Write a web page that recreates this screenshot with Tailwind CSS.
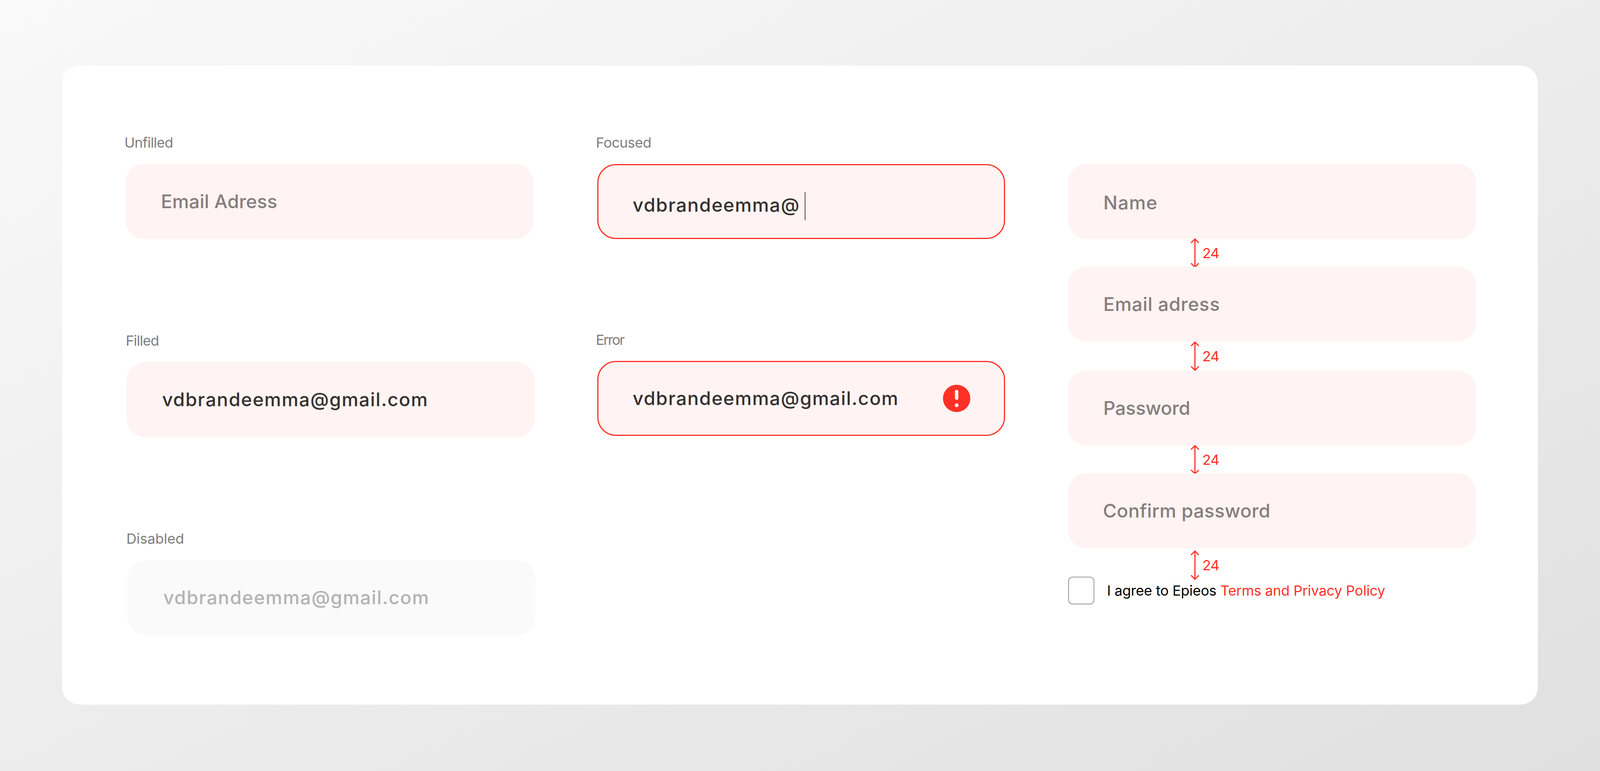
<!DOCTYPE html>
<html lang="en">
<head>
    <meta charset="utf-8" />
    <title>Input fields</title>
    <script src="https://cdn.jsdelivr.net/npm/@tailwindcss/browser@4"></script>
</head>
<body class="w-screen h-screen overflow-hidden bg-gradient-to-br from-[#f9f9f9] to-[#e0e0e0] font-['Inter',sans-serif]">
    <div class="ml-[159px] mt-[168px] w-[3778px] h-[1636px] bg-white rounded-[45px] pl-[162px] pt-[170px] flex">

        <!-- column 1 -->
        <div class="w-[1207.6px] flex flex-col">
            <div class="-ml-[2.5px] text-[36px] leading-[54px] tracking-[-0.8px] text-[#7d7d7d]">Unfilled</div>
            <div class="mt-[28px] w-[1045px] h-[192px] rounded-[48px] bg-[#fff3f3] flex items-center pl-[91px] text-[48px] font-medium leading-[60px] text-[#857d7c] tracking-[0.1px]">Email Adress</div>

            <div class="mt-[233px] ml-[1px] text-[36px] leading-[54px] tracking-[-1px] text-[#7d7d7d]">Filled</div>
            <div class="mt-[28px] ml-[3px] w-[1045px] h-[192px] rounded-[48px] bg-[#fff3f3] flex items-center pl-[91px] text-[48px] font-medium leading-[60px] text-[#353130] tracking-[1.7px]">vdbrandeemma@gmail.com</div>

            <div class="mt-[233px] ml-[2.5px] text-[36px] leading-[54px] tracking-[0px] text-[#7d7d7d]">Disabled</div>
            <div class="mt-[28px] ml-[5px] w-[1045px] h-[192px] rounded-[48px] bg-[#fafafa] flex items-center pl-[92px] text-[48px] font-medium leading-[60px] text-[#b3b3b3] tracking-[1.7px]">vdbrandeemma@gmail.com</div>
        </div>

        <!-- column 2 -->
        <div class="w-[1205.4px] flex flex-col">
            <div class="-ml-[3px] text-[36px] leading-[54px] tracking-[-0.5px] text-[#7d7d7d]">Focused</div>
            <div class="mt-[28px] w-[1044px] h-[192px] rounded-[48px] bg-[#fff3f3] border-[3px] border-[#ff3126] flex items-center pl-[88px] text-[48px] font-medium leading-[60px] text-[#353130] tracking-[1.7px]">
                <span class="mt-[18px]">vdbrandeemma@</span>
                <span class="ml-[12px] mt-[24px] w-[2px] h-[72px] bg-[#4a4645]"></span>
            </div>

            <div class="mt-[230.5px] -ml-[3px] text-[36px] leading-[54px] tracking-[-2.5px] text-[#7d7d7d]">Error</div>
            <div class="mt-[27.5px] w-[1044px] h-[192px] rounded-[48px] bg-[#fff3f3] border-[3px] border-[#ff3126] flex items-center pl-[88px] pr-[86px] text-[48px] font-medium leading-[60px] text-[#353130] tracking-[1.7px]">
                <span>vdbrandeemma@gmail.com</span>
                <svg class="ml-auto w-[70px] h-[70px]" viewBox="0 0 72 72">
                    <circle cx="36" cy="36" r="36" fill="#ff3126" />
                    <rect x="31.5" y="13" width="9" height="27" rx="4.5" fill="#fff3f3" />
                    <circle cx="36" cy="54" r="5" fill="#fff3f3" />
                </svg>
            </div>
        </div>

        <!-- column 3 -->
        <div class="w-[1045px] flex flex-col mt-[82px]">
            <div class="h-[192px] rounded-[48px] bg-[#fff3f3] flex items-center pl-[90.5px] text-[48px] font-medium leading-[60px] text-[#857d7c] tracking-[1.2px]"><span class="mt-[6px]">Name</span></div>
            <div class="h-[71px] flex items-center pl-[313px]">
                <svg class="w-[24px] h-[76px]" viewBox="0 0 24 76" fill="none" stroke="#ff3126" stroke-width="3"><path d="M12 2V74M2 12L12 2L22 12M2 64L12 74L22 64" /></svg>
                <span class="ml-[7px] text-[36px] leading-[54px] tracking-[-1px] text-[#ff3126]">24</span>
            </div>
            <div class="h-[192px] rounded-[48px] bg-[#fff3f3] flex items-center pl-[90.5px] text-[48px] font-medium leading-[60px] text-[#857d7c] tracking-[0.7px]">Email adress</div>
            <div class="h-[74px] flex items-center pl-[313px]">
                <svg class="w-[24px] h-[76px]" viewBox="0 0 24 76" fill="none" stroke="#ff3126" stroke-width="3"><path d="M12 2V74M2 12L12 2L22 12M2 64L12 74L22 64" /></svg>
                <span class="ml-[7px] text-[36px] leading-[54px] tracking-[-1px] text-[#ff3126]">24</span>
            </div>
            <div class="h-[192px] rounded-[48px] bg-[#fff3f3] flex items-center pl-[90.5px] text-[48px] font-medium leading-[60px] text-[#857d7c] tracking-[-0.3px]">Password</div>
            <div class="h-[71px] flex items-center pl-[313px]">
                <svg class="w-[24px] h-[76px]" viewBox="0 0 24 76" fill="none" stroke="#ff3126" stroke-width="3"><path d="M12 2V74M2 12L12 2L22 12M2 64L12 74L22 64" /></svg>
                <span class="ml-[7px] text-[36px] leading-[54px] tracking-[-1px] text-[#ff3126]">24</span>
            </div>
            <div class="h-[192px] rounded-[48px] bg-[#fff3f3] flex items-center pl-[89.5px] text-[48px] font-medium leading-[60px] text-[#857d7c] tracking-[0.4px]">Confirm password</div>
            <div class="h-[72px] flex items-center pl-[313px] pt-[14px]">
                <svg class="w-[24px] h-[76px]" viewBox="0 0 24 76" fill="none" stroke="#ff3126" stroke-width="3"><path d="M12 2V74M2 12L12 2L22 12M2 64L12 74L22 64" /></svg>
                <span class="ml-[7px] text-[36px] leading-[54px] tracking-[-1px] text-[#ff3126]">24</span>
            </div>
            <div class="flex items-center">
                <span class="w-[68px] h-[72px] rounded-[12px] border-[3px] border-[#b5b5b5] bg-white"></span>
                <span class="ml-[32px] text-[36px] leading-[54px] text-black tracking-[-0.25px]">I agree to Epieos <span class="text-[#ff3126]">Terms and Privacy Policy</span></span>
            </div>
        </div>
    </div>
</body>
</html>
